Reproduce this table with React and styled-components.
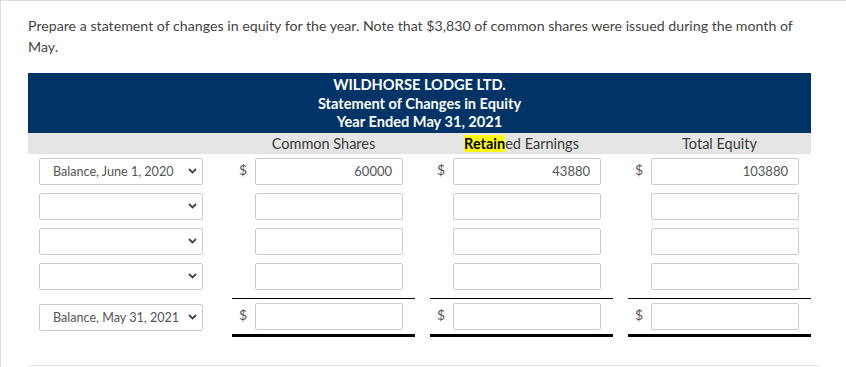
import React from 'react';
import styled, { createGlobalStyle } from 'styled-components';

const GlobalStyle = createGlobalStyle`
    body {
        margin: 0;
        background: #fff;
        font-family: Lato, "Open Sans", sans-serif;
        color: #333;
    }
`;

const rows = [
    { label: 'Balance, June 1, 2020', values: ['60000', '43880', '103880'], dollar: true },
    { label: '', values: ['', '', ''] },
    { label: '', values: ['', '', ''] },
    { label: '', values: ['', '', ''] },
    { label: 'Balance, May 31, 2021', values: ['', '', ''], dollar: true, total: true },
];

const Chevron = () => (
    <svg width="9" height="6" viewBox="0 0 9 6">
        <path d="M1 1 L4.5 4.5 L8 1" fill="none" stroke="#444" strokeWidth="1.8" />
    </svg>
);

const App = () => {
    return (
        <Panel>
            <GlobalStyle />
            <Prompt>
                Prepare a statement of changes in equity for the year. Note that $3,830 of common shares were issued during the month of May.
            </Prompt>
            <Statement>
                <Title>
                    <div>WILDHORSE LODGE LTD.</div>
                    <div>Statement of Changes in Equity</div>
                    <div>Year Ended May 31, 2021</div>
                </Title>
                <HeadRow>
                    <span />
                    <HeadCell>Common Shares</HeadCell>
                    <HeadCell><Mark>Retain</Mark>ed Earnings</HeadCell>
                    <HeadCell>Total Equity</HeadCell>
                </HeadRow>
                {rows.map((row, i) => (
                    <Row key={i} $total={row.total}>
                        <LabelCell>
                            <SelectBox>
                                <span>{row.label}</span>
                                <Chevron />
                            </SelectBox>
                        </LabelCell>
                        {row.values.map((v, j) => (
                            <MoneyCell key={j} $total={row.total}>
                                <Dollar>{row.dollar ? '$' : ''}</Dollar>
                                <Amount value={v} readOnly />
                            </MoneyCell>
                        ))}
                    </Row>
                ))}
            </Statement>
            <NextCard />
        </Panel>
    );
};

const Panel = styled.div`
    border-top: 1px solid #ddd;
    border-left: 1px solid #ddd;
    padding: 14px 0 0 27px;
    height: 400px;
    box-sizing: border-box;
`;

const Prompt = styled.p`
    margin: 0;
    width: 775px;
    font-size: 14.2px;
    line-height: 21px;
    color: #444;
`;

const Statement = styled.div`
    width: 783px;
    margin-top: 16px;
`;

const Title = styled.div`
    background: #003366;
    color: #fff;
    font-weight: 700;
    font-size: 14.6px;
    line-height: 18.5px;
    text-align: center;
    padding: 3px 0 1px;
`;

const grid = `
    display: grid;
    grid-template-columns: 189px repeat(3, 183px);
    column-gap: 15px;
`;

const HeadRow = styled.div`
    ${grid}
    background: #e5e5e5;
    height: 21px;
    align-items: center;
`;

const HeadCell = styled.div`
    text-align: center;
    font-size: 14.5px;
    color: #3a3a3a;
`;

const Mark = styled.span`
    background: #ffff00;
    color: #000;
    font-weight: 700;
`;

const Row = styled.div`
    ${grid}
    margin-top: ${p => (p.$total ? '4px' : '0')};
`;

const LabelCell = styled.div`
    padding: 4px 14px 4px 11px;
    display: flex;
    align-items: center;
`;

const SelectBox = styled.div`
    flex: 1;
    height: 27px;
    box-sizing: border-box;
    border: 1px solid #ccc;
    border-radius: 2px;
    display: flex;
    align-items: center;
    justify-content: space-between;
    padding: 0 5px 0 13px;
    font-size: 12.6px;
    color: #555;
`;

const MoneyCell = styled.div`
    display: flex;
    align-items: center;
    padding: 4px 12px 4px 0;
    border-top: ${p => (p.$total ? '1px solid #000' : 'none')};
    border-bottom: ${p => (p.$total ? '3px solid #000' : 'none')};
`;

const Dollar = styled.span`
    width: 23px;
    box-sizing: border-box;
    padding-left: 7px;
    font-size: 14px;
    color: #555;
    margin-top: -3px;
`;

const Amount = styled.input`
    width: 148px;
    height: 27px;
    box-sizing: border-box;
    border: 1px solid #ccc;
    border-radius: 2px;
    padding: 0 10px;
    text-align: right;
    font-family: Lato, sans-serif;
    font-size: 13px;
    color: #555;
    outline: none;
`;

const NextCard = styled.div`
    width: 792px;
    height: 80px;
    margin-top: 28px;
    border: 1px solid #e2e2e2;
    border-radius: 4px;
    box-sizing: border-box;
`;

export default App;
